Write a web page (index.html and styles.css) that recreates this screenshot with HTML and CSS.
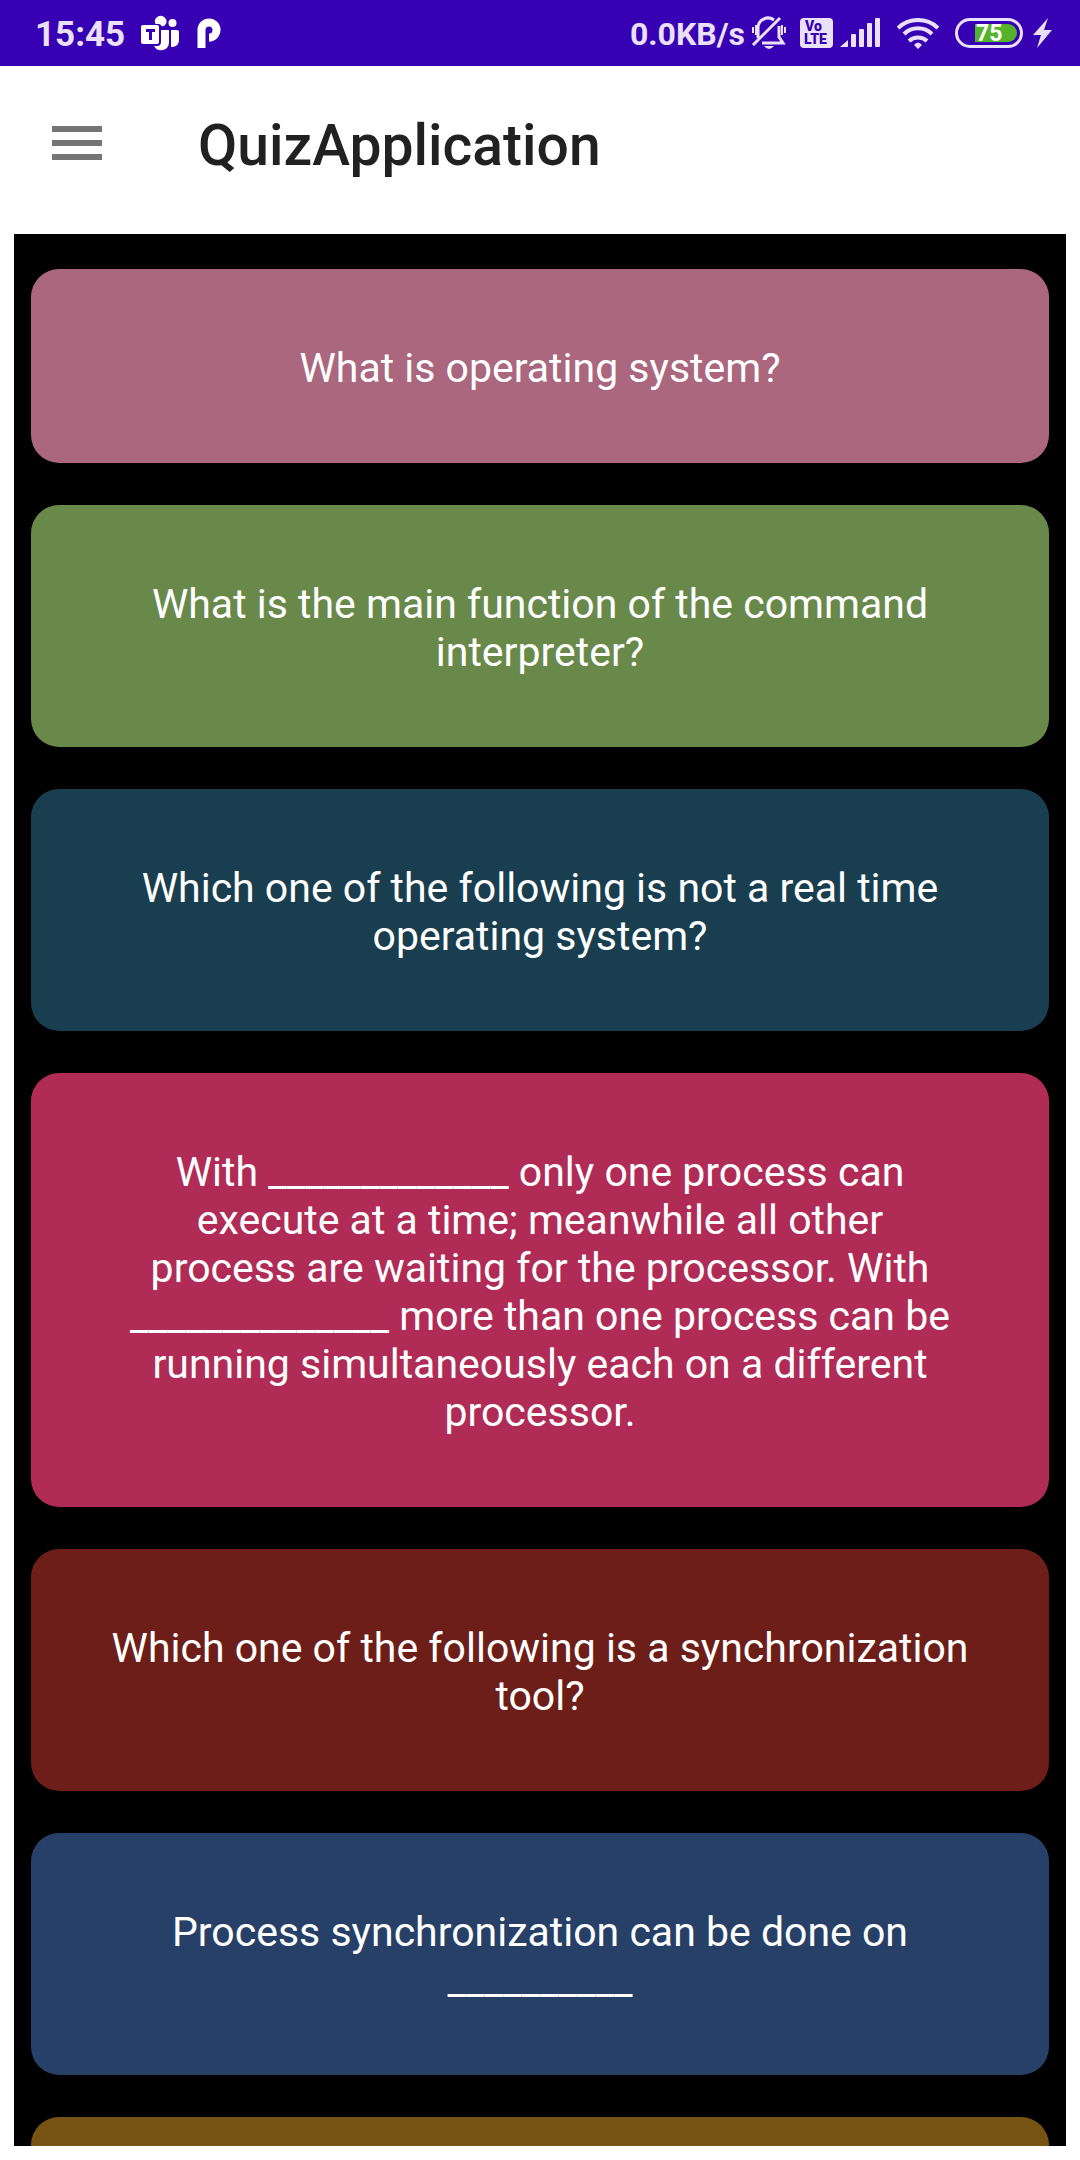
FILE: index.html
```html
<!DOCTYPE html>
<html lang="en">
<head>
<meta charset="utf-8">
<meta name="viewport" content="width=device-width, initial-scale=1">
<title>QuizApplication</title>
<link rel="stylesheet" href="styles.css">
</head>
<body>
<div class="status-bar">
  <div class="status-group status-left">
    <span class="status-time">15:45</span>
    <svg class="icon-teams" width="40" height="38" viewBox="139 14 40 38" fill="#fff" aria-hidden="true">
      <path d="M153.500 24a5.700 5.700 0 1 1 9.500 1.300q-2 1.300-3.700.8-.5-2-2.300-2.100z"/>
      <circle cx="170.500" cy="23" r="4"/>
      <path fill-rule="evenodd" d="M141 25h14a2 2 0 0 1 2 2v15a2 2 0 0 1-2 2h-14a2 2 0 0 1-2-2V27a2 2 0 0 1 2-2zm3 4v3h3v8h3v-8h3v-3z"/>
      <path d="M159 30h8v13a8 8 0 0 1-15 3h4q3-1 3-4z"/>
      <path d="M169 30h6a2 2 0 0 1 2 2v9q-1 6-8 6z"/>
    </svg>
    <svg class="icon-p" width="24" height="32" viewBox="196 17 24 32" aria-hidden="true">
      <path d="M200.500 48V30a7.500 7.500 0 1 1 7.500 7.500" fill="none" stroke="#fff" stroke-width="8"/>
    </svg>
  </div>
  <div class="status-group status-right">
    <span class="status-speed">0.0KB/s</span>
    <svg width="36" height="34" viewBox="751 16 36 34" fill="none" stroke="#ebe0fb" stroke-width="3" aria-hidden="true">
      <path d="M758 38V28a10 10 0 0 1 16-8M779 26v11l4 6H762M753 45l27-27"/>
      <path d="M753 27v6M756 25v10M785 27v6M782 25v10" stroke-width="2"/>
      <path d="M764 46h10q-5 6-10 0z" fill="#ebe0fb" stroke="none"/>
    </svg>
    <svg class="icon-lte" width="33" height="30" viewBox="0 0 33 30" role="img" aria-label="VoLTE">
      <rect width="33" height="30" rx="4" fill="#ebe0fb"/>
      <g class="lte-text"><text x="5" y="13">Vo</text><text x="4" y="26">LTE</text></g>
    </svg>
    <svg class="icon-signal" width="41" height="30" viewBox="0 0 41 30" fill="#ebe0fb" aria-hidden="true">
      <path d="M0 29l8-7v6q0 1-1 1z"/>
      <rect x="11" y="16" width="5" height="13" rx="1"/><rect x="19" y="11" width="5" height="18" rx="1"/><rect x="27" y="5" width="5" height="24" rx="1"/><rect x="35" y="0" width="5" height="29" rx="1"/>
    </svg>
    <svg class="icon-wifi" width="42" height="32" viewBox="896 17 42 32" aria-hidden="true">
      <g fill="none" stroke="#ebe0fb" stroke-width="4"><path d="M897 28a29 29 0 0 1 40 0M903 34a20 20 0 0 1 28 0M908 41a13 13 0 0 1 18 0"/></g>
      <path d="M913 45q4-5 8 0l-4 4z" fill="#ebe0fb"/>
    </svg>
    <span class="battery"><span class="battery-level">75</span></span>
    <svg class="icon-bolt" width="19" height="30" viewBox="0 0 19 30" fill="#ebe0fb" aria-hidden="true"><path d="M15 0L0 17h8L4 30 19 12h-8z"/></svg>
  </div>
</div>
<header class="app-bar">
  <button class="menu-button" type="button" aria-label="Open menu">
    <svg width="50" height="34" viewBox="0 0 50 34" fill="#757575" aria-hidden="true"><path d="M0 0h50v6H0zM0 14h50v6H0zM0 28h50v6H0z"/></svg>
  </button>
  <h1 class="app-title">QuizApplication</h1>
</header>
<main class="quiz">
  <ul class="question-list">
    <li class="question mauve">What is operating system?</li>
    <li class="question green">What is the main function of the command interpreter?</li>
    <li class="question teal">Which one of the following is not a real time operating system?</li>
    <li class="question crimson">With _____________ only one process can<br>execute at a time; meanwhile all other<br>process are waiting for the processor. With<br>______________ more than one process can be<br>running simultaneously each on a different<br>processor.</li>
    <li class="question maroon">Which one of the following is a synchronization tool?</li>
    <li class="question blue">Process synchronization can be done on __________</li>
    <li class="question brown"></li>
  </ul>
</main>
</body>
</html>
```
FILE: styles.css
```css
* { box-sizing: border-box; }
body {
  margin: 0;
  height: 100vh;
  display: flex;
  flex-direction: column;
  background: #fff;
  font-family: Roboto, "Liberation Sans", sans-serif;
}
.status-bar {
  flex: none;
  height: 66px;
  padding: 0 28px 0 35px;
  display: flex;
  align-items: center;
  justify-content: space-between;
  background: #3700b3;
  color: #ebe0fb;
  font-size: 35px;
  font-weight: 700;
}
.status-group { display: flex; align-items: center; }
.status-time, .status-speed { padding-top: 2px; }
.status-left { gap: 16px; }
.status-speed { font-size: 32px; margin-right: 6px; }
.icon-lte { margin-left: 13px; }
.lte-text {
  fill: #3700b3;
  font-size: 14px;
  font-weight: 900;
}
.icon-signal { margin-left: 7px; }
.icon-wifi { margin-left: 16px; }
.battery {
  width: 68px;
  height: 30px;
  margin: 0 10px 0 16px;
  padding: 3px;
  display: flex;
  justify-content: flex-end;
  border: 3px solid #ebe0fb;
  border-radius: 15px;
}
.battery-level {
  width: 42px;
  height: 18px;
  padding-left: 1px;
  border-radius: 0 9px 9px 0;
  background: #55b22a;
  color: #fff;
  font-size: 23px;
  line-height: 20px;
}
.app-bar {
  flex: none;
  height: 168px;
  padding: 0 52px;
  display: flex;
  align-items: center;
  gap: 96px;
}
.menu-button {
  padding: 0 0 14px;
  border: 0;
  background: none;
}
.menu-button svg { display: block; }
.app-title {
  margin: 0 0 8px;
  color: #212121;
  font-size: 57px;
  font-weight: 500;
  line-height: 64px;
}
.quiz {
  flex: 1;
  min-height: 0;
  margin: 0 14px 14px;
  padding: 35px 17px 0;
  overflow: hidden;
  background: #000;
}
.question-list {
  margin: 0;
  padding: 0;
  display: flex;
  flex-direction: column;
  gap: 42px;
  list-style: none;
}
.question {
  min-height: 194px;
  padding: 75px 72px 71px;
  border-radius: 28px;
  color: #fff;
  font-size: 41px;
  line-height: 48px;
  text-align: center;
}
.mauve { background: #aa677d; }
.green { background: #69894b; }
.teal { background: #193e4f; }
.crimson { background: #b02c56; }
.maroon { background: #6d1e18; }
.blue { background: #274068; }
.brown { background: #785414; }
```
